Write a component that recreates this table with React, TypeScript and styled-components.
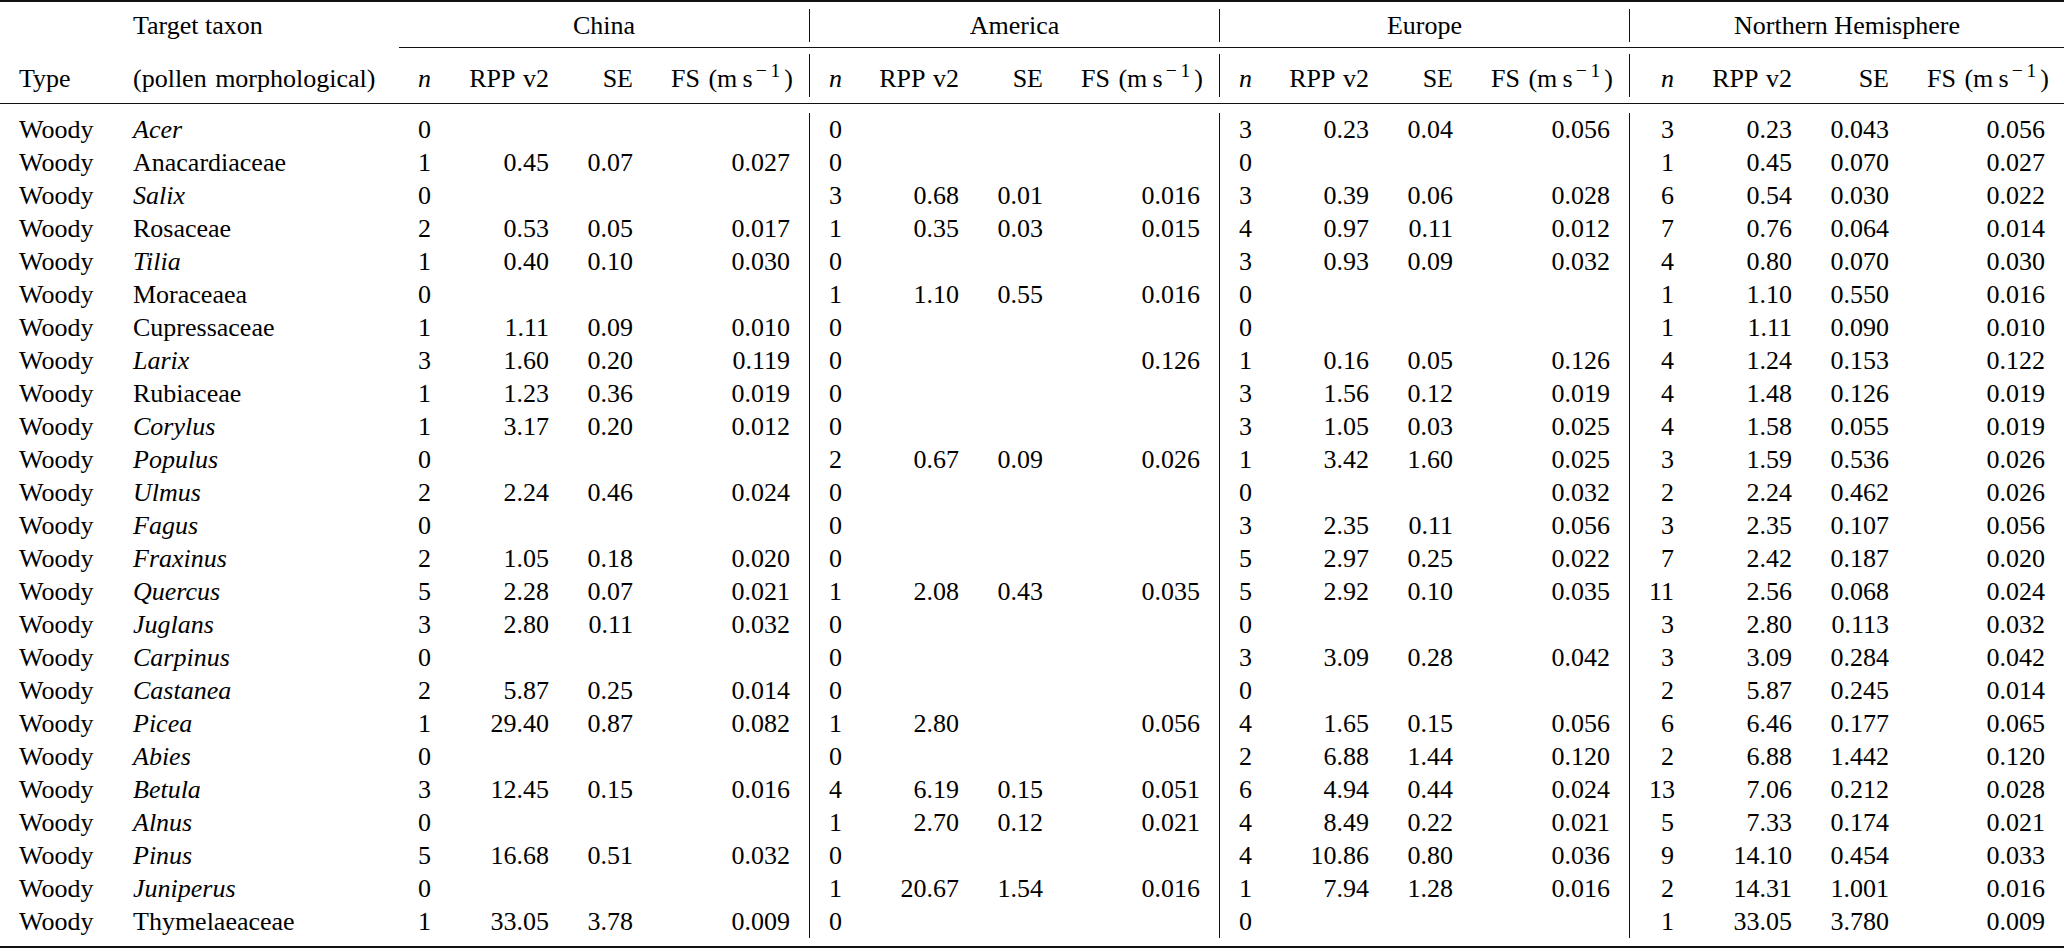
import styled, { createGlobalStyle } from "styled-components";
import React from "react";

const GlobalStyle = createGlobalStyle`
  html, body {
    margin: 0;
    padding: 0;
    background: #ffffff;
  }
  body {
    font-family: "Liberation Serif", "Times New Roman", serif;
    color: #000000;
  }
`;

// column widths measured off the reference (px)
const GROUP = [51, 118, 84, 157];
const COLUMNS = [114, 285, ...GROUP, ...GROUP, ...GROUP, 64, 118, 97, 156];
const TEMPLATE = COLUMNS.map((w) => `${w}px`).join(" ");
const TABLE_WIDTH = COLUMNS.reduce((a, b) => a + b, 0);

const REGIONS = ["China", "America", "Europe", "Northern Hemisphere"];

type Row = [string, boolean, string[]];

// taxon, italic, then n / RPP v2 / SE / FS for each of the four regions
const ROWS: Row[] = [
  ["Acer", true, ["0", "", "", "", "0", "", "", "", "3", "0.23", "0.04", "0.056", "3", "0.23", "0.043", "0.056"]],
  ["Anacardiaceae", false, ["1", "0.45", "0.07", "0.027", "0", "", "", "", "0", "", "", "", "1", "0.45", "0.070", "0.027"]],
  ["Salix", true, ["0", "", "", "", "3", "0.68", "0.01", "0.016", "3", "0.39", "0.06", "0.028", "6", "0.54", "0.030", "0.022"]],
  ["Rosaceae", false, ["2", "0.53", "0.05", "0.017", "1", "0.35", "0.03", "0.015", "4", "0.97", "0.11", "0.012", "7", "0.76", "0.064", "0.014"]],
  ["Tilia", true, ["1", "0.40", "0.10", "0.030", "0", "", "", "", "3", "0.93", "0.09", "0.032", "4", "0.80", "0.070", "0.030"]],
  ["Moraceaea", false, ["0", "", "", "", "1", "1.10", "0.55", "0.016", "0", "", "", "", "1", "1.10", "0.550", "0.016"]],
  ["Cupressaceae", false, ["1", "1.11", "0.09", "0.010", "0", "", "", "", "0", "", "", "", "1", "1.11", "0.090", "0.010"]],
  ["Larix", true, ["3", "1.60", "0.20", "0.119", "0", "", "", "0.126", "1", "0.16", "0.05", "0.126", "4", "1.24", "0.153", "0.122"]],
  ["Rubiaceae", false, ["1", "1.23", "0.36", "0.019", "0", "", "", "", "3", "1.56", "0.12", "0.019", "4", "1.48", "0.126", "0.019"]],
  ["Corylus", true, ["1", "3.17", "0.20", "0.012", "0", "", "", "", "3", "1.05", "0.03", "0.025", "4", "1.58", "0.055", "0.019"]],
  ["Populus", true, ["0", "", "", "", "2", "0.67", "0.09", "0.026", "1", "3.42", "1.60", "0.025", "3", "1.59", "0.536", "0.026"]],
  ["Ulmus", true, ["2", "2.24", "0.46", "0.024", "0", "", "", "", "0", "", "", "0.032", "2", "2.24", "0.462", "0.026"]],
  ["Fagus", true, ["0", "", "", "", "0", "", "", "", "3", "2.35", "0.11", "0.056", "3", "2.35", "0.107", "0.056"]],
  ["Fraxinus", true, ["2", "1.05", "0.18", "0.020", "0", "", "", "", "5", "2.97", "0.25", "0.022", "7", "2.42", "0.187", "0.020"]],
  ["Quercus", true, ["5", "2.28", "0.07", "0.021", "1", "2.08", "0.43", "0.035", "5", "2.92", "0.10", "0.035", "11", "2.56", "0.068", "0.024"]],
  ["Juglans", true, ["3", "2.80", "0.11", "0.032", "0", "", "", "", "0", "", "", "", "3", "2.80", "0.113", "0.032"]],
  ["Carpinus", true, ["0", "", "", "", "0", "", "", "", "3", "3.09", "0.28", "0.042", "3", "3.09", "0.284", "0.042"]],
  ["Castanea", true, ["2", "5.87", "0.25", "0.014", "0", "", "", "", "0", "", "", "", "2", "5.87", "0.245", "0.014"]],
  ["Picea", true, ["1", "29.40", "0.87", "0.082", "1", "2.80", "", "0.056", "4", "1.65", "0.15", "0.056", "6", "6.46", "0.177", "0.065"]],
  ["Abies", true, ["0", "", "", "", "0", "", "", "", "2", "6.88", "1.44", "0.120", "2", "6.88", "1.442", "0.120"]],
  ["Betula", true, ["3", "12.45", "0.15", "0.016", "4", "6.19", "0.15", "0.051", "6", "4.94", "0.44", "0.024", "13", "7.06", "0.212", "0.028"]],
  ["Alnus", true, ["0", "", "", "", "1", "2.70", "0.12", "0.021", "4", "8.49", "0.22", "0.021", "5", "7.33", "0.174", "0.021"]],
  ["Pinus", true, ["5", "16.68", "0.51", "0.032", "0", "", "", "", "4", "10.86", "0.80", "0.036", "9", "14.10", "0.454", "0.033"]],
  ["Juniperus", true, ["0", "", "", "", "1", "20.67", "1.54", "0.016", "1", "7.94", "1.28", "0.016", "2", "14.31", "1.001", "0.016"]],
  ["Thymelaeaceae", false, ["1", "33.05", "3.78", "0.009", "0", "", "", "", "0", "", "", "", "1", "33.05", "3.780", "0.009"]],
];

const App: React.FC = () => {
  return (
    <>
      <GlobalStyle />
      <Table>
        <Rule $weight={2} $below={7} />

        <Grid $rowHeight={33} $below={5}>
          <Cell $align="left" style={{ gridColumn: "2" }}>Target taxon</Cell>
          {REGIONS.map((region, i) => (
            <GroupCell key={region} $start={3 + i * 4} $sep={i > 0}>
              {region}
            </GroupCell>
          ))}
        </Grid>

        <Rule $weight={1} $below={6} $indent={COLUMNS[0] + COLUMNS[1]} />

        <Grid $rowHeight={43} $below={6}>
          <HeadCell $align="left">Type</HeadCell>
          <HeadCell $align="left">(pollen morphological)</HeadCell>
          {REGIONS.map((region, i) => (
            <React.Fragment key={region}>
              <HeadCell $align="right" $sep={i > 0} $italic>n</HeadCell>
              <HeadCell $align="right">RPP v2</HeadCell>
              <HeadCell $align="right">SE</HeadCell>
              <HeadCell $align="right">
                FS (m{"\u2009"}s<Sup>−1</Sup>)
              </HeadCell>
            </React.Fragment>
          ))}
        </Grid>

        <Rule $weight={1} $below={9} />

        <Grid $rowHeight={33} $below={8}>
          {ROWS.map(([taxon, italic, values]) => (
            <React.Fragment key={taxon}>
              <Cell $align="left">Woody</Cell>
              <Cell $align="left" $italic={italic}>{taxon}</Cell>
              {values.map((v, j) => (
                <Cell key={j} $align="right" $sep={j > 0 && j % 4 === 0}>
                  {v}
                </Cell>
              ))}
            </React.Fragment>
          ))}
        </Grid>

        <Rule $weight={2} $below={0} />
      </Table>
    </>
  );
};

export default App;

const Table = styled.div`
  width: ${TABLE_WIDTH}px;
  font-family: "Liberation Serif", "Times New Roman", serif;
  font-size: 26px;
  color: #000000;
  background: #ffffff;
`;

const Rule = styled.div<{ $weight: number; $below: number; $indent?: number }>`
  height: ${(p) => p.$weight}px;
  margin-left: ${(p) => p.$indent ?? 0}px;
  margin-bottom: ${(p) => p.$below}px;
  background: #111111;
`;

const Grid = styled.div<{ $rowHeight: number; $below: number }>`
  display: grid;
  grid-template-columns: ${TEMPLATE};
  grid-auto-rows: ${(p) => p.$rowHeight}px;
  margin-bottom: ${(p) => p.$below}px;
`;

const Cell = styled.div<{ $align: "left" | "right" | "center"; $sep?: boolean; $italic?: boolean }>`
  padding: 0 19px;
  line-height: 33px;
  white-space: nowrap;
  text-align: ${(p) => p.$align};
  font-style: ${(p) => (p.$italic ? "italic" : "normal")};
  border-left: ${(p) => (p.$sep ? "1px solid #111111" : "none")};
`;

const HeadCell = styled(Cell)`
  padding-top: 8px;
  word-spacing: 2px;
`;

const GroupCell = styled.div<{ $start: number; $sep?: boolean }>`
  grid-column: ${(p) => p.$start} / span 4;
  line-height: 33px;
  text-align: center;
  white-space: nowrap;
  border-left: ${(p) => (p.$sep ? "1px solid #111111" : "none")};
`;

const Sup = styled.sup`
  font-size: 0.75em;
  line-height: 0;
  vertical-align: 0.5em;
  letter-spacing: 0.2em;
  margin: 0 0 0 3px;
`;
